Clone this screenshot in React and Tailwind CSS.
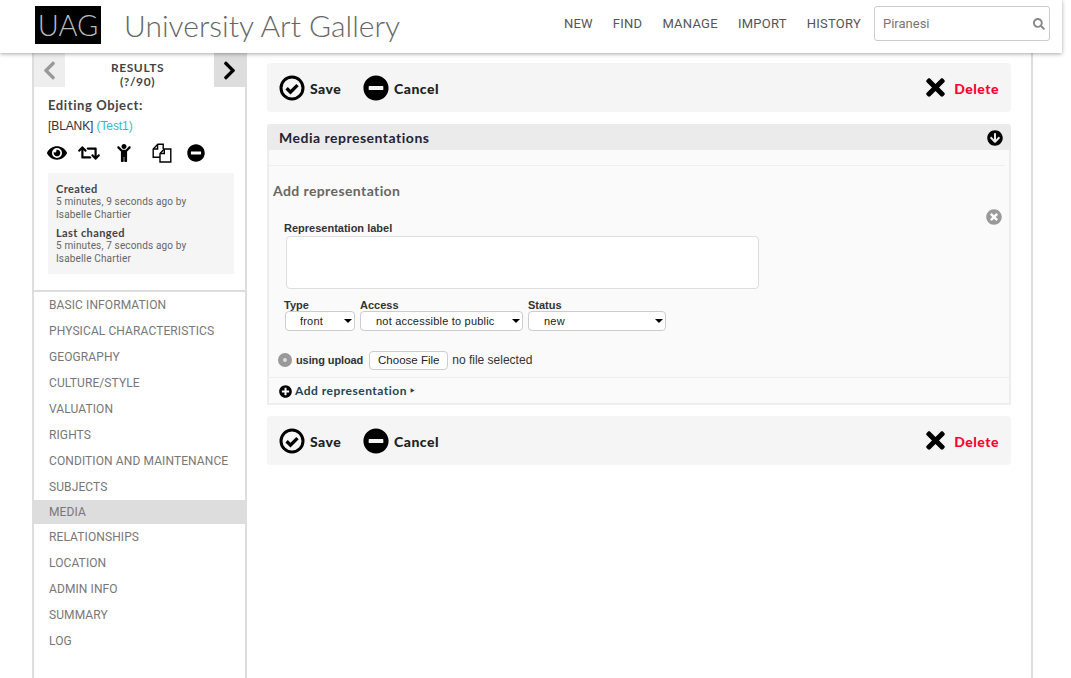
import React from 'react';
import { FaEye, FaRetweet, FaChild, FaMinusCircle, FaTimes, FaArrowCircleDown, FaTimesCircle, FaPlusCircle, FaSearch, FaChevronLeft, FaChevronRight } from 'react-icons/fa';

const din = { fontFamily: 'Roboto, "Liberation Sans", sans-serif' };
const nav = ['BASIC INFORMATION','PHYSICAL CHARACTERISTICS','GEOGRAPHY','CULTURE/STYLE','VALUATION','RIGHTS','CONDITION AND MAINTENANCE','SUBJECTS'];
const nav2 = ['RELATIONSHIPS','LOCATION','ADMIN INFO','SUMMARY','LOG'];
const heavy = 'font-["Lato",sans-serif] font-black';

function CheckRing() {
  return (
    <svg width="26" height="26" viewBox="0 0 26 26" fill="none">
      <circle cx="13" cy="13" r="11" stroke="#000" strokeWidth="3" />
      <path d="M7.6 13.2l3.9 3.9 7-7" stroke="#000" strokeWidth="3.4" strokeLinejoin="miter" />
    </svg>
  );
}

function Files() {
  return (
    <svg width="20" height="20" viewBox="0 0 20 20" fill="none" stroke="#000" strokeWidth="1.4">
      <path d="M8 14.3H1.2V6L5.8 1.2h5.4V6" />
      <path d="M5.6 1.4V6H1.4" />
      <path d="M8 19V10.5L12.3 6h6.5v13z" fill="#fff" />
      <path d="M12.3 6v4.5H8" />
    </svg>
  );
}

function Toolbar({ className = '' }) {
  const label = `mt-[2px] text-[14px] tracking-[0.5px] ${heavy}`;
  return (
    <div className={`flex h-[49px] items-center rounded bg-[#f5f5f5] pl-3 pr-3 ${className}`}>
      <CheckRing />
      <span className={`ml-[5px] w-[32px] ${label} text-[#222]`}>Save</span>
      <FaMinusCircle className="ml-[21px] text-[26px] text-black" />
      <span className={`ml-[5px] ${label} text-[#222]`}>Cancel</span>
      <FaTimes className="ml-auto text-[27px] text-black" />
      <span className={`ml-[5px] ${label} text-[#ff0033]`}>Delete</span>
    </div>
  );
}

function Sel({ width, text, cls }) {
  return (
    <div className={`relative h-5 ${width}`}>
      <select className={`h-5 w-full appearance-none rounded-[4px] border border-[#ccc] bg-white text-[11px] font-normal tracking-[0.2px] text-[#222] outline-none ${cls}`} defaultValue={text} style={{ fontFamily: '"Liberation Sans", sans-serif' }}>
        <option>{text}</option>
      </select>
      <span className="pointer-events-none absolute right-[3px] top-[8px] h-0 w-0 border-x-[4px] border-t-[4px] border-x-transparent border-t-black" />
    </div>
  );
}

export default function App() {
  const arial = { fontFamily: '"Liberation Sans", sans-serif' };
  return (
    <div className="relative h-[678px] w-[1071px] overflow-hidden bg-white" style={din}>
      <header className="relative z-10 flex h-[53px] w-[1062px] items-center bg-white pb-[6px] pl-[35px] shadow-[0_1px_4px_rgba(0,0,0,0.35)]">
        <div className="mt-[3px] flex h-[38px] w-[66px] items-center justify-center bg-black text-[29px] font-light text-[#bbb]" style={{ fontFamily: 'Lato, sans-serif' }}>UAG</div>
        <div className="ml-[23px] mt-[3px] text-[30px] font-light text-[#666]" style={{ fontFamily: 'Lato, sans-serif' }}>University Art Gallery</div>
        <nav className="ml-auto flex items-center gap-[20px] text-[13px] tracking-[0.25px] text-[#555]">
          <span>NEW</span><span>FIND</span><span>MANAGE</span><span>IMPORT</span><span>HISTORY</span>
        </nav>
        <div className="ml-[13px] mr-3 flex h-[35px] w-[176px] items-center rounded-[3px] border border-[#ccc] pl-2 pr-[4px]">
          <input className="w-full bg-transparent text-[13px] text-[#777] outline-none" defaultValue="Piranesi" />
          <FaSearch className="shrink-0 text-[12px] text-[#888]" />
        </div>
      </header>

      <div className="ml-[32px] flex h-[625px] w-[1001px] border-x-2 border-[#ddd]">
        <aside className="w-[213px] shrink-0 border-r-2 border-[#ddd]">
          <div className="flex h-[34px]">
            <div className="flex w-[31px] items-center justify-center bg-[#eee] text-[21px] text-[#999]"><FaChevronLeft /></div>
            <div className={`flex-1 pr-[4px] pt-[8px] text-center text-[12px] leading-[14px] tracking-[0.6px] text-[#444] ${heavy} !font-bold`}>RESULTS<br />(?/90)</div>
            <div className="flex w-[31px] items-center justify-center bg-[#ddd] text-[21px] text-black"><FaChevronRight /></div>
          </div>
          <div className="px-[14px]">
            <div className={`mt-[11px] text-[13px] tracking-[0.6px] leading-[14px] text-[#444] ${heavy} !font-bold`}>Editing Object:</div>
            <div className="mt-[7px] text-[12px] leading-[14px] tracking-[-0.1px] text-[#333]" style={arial}>[BLANK] <span className="text-[#33bbcc]">(Test1)</span></div>
            <div className="mt-[9px] flex h-[21px] items-center text-black">
              <FaEye className="-ml-px text-[20px]" />
              <FaRetweet className="ml-[11px] text-[22px]" />
              <FaChild className="ml-[15px] text-[18px]" />
              <span className="ml-[19px] flex"><Files /></span>
              <FaMinusCircle className="ml-[15px] text-[18px]" />
            </div>
            <div className="mt-[10px] h-[101px] w-[186px] bg-[#f5f5f5] px-2 pt-[9px] text-[10px] leading-[13px] tracking-[0.15px] text-[#666]">
              <div className={`${heavy} !font-bold text-[11px] text-[#444] tracking-[0.4px]`}>Created</div>
              <div>5 minutes, 9 seconds ago by</div>
              <div>Isabelle Chartier</div>
              <div className={`${heavy} !font-bold mt-[5px] text-[11px] text-[#444] tracking-[0.4px]`}>Last changed</div>
              <div>5 minutes, 7 seconds ago by</div>
              <div>Isabelle Chartier</div>
            </div>
          </div>
          <div className="mt-4 border-t-2 border-[#ddd] text-[12px] tracking-[0.1px] text-[#777]">
            {nav.map((n) => <div key={n} className="flex h-[26px] items-center pl-[15px]">{n}</div>)}
            <div className="flex h-[24px] items-center bg-[#ddd] pl-[15px]">MEDIA</div>
            {nav2.map((n) => <div key={n} className="flex h-[26px] items-center pl-[15px]">{n}</div>)}
          </div>
        </aside>

        <main className="w-[784px] px-[20px] pt-[10px]">
          <Toolbar />
          <section className="mt-3 rounded-t border-x-2 border-b-2 border-[#eee]">
            <div className="-mx-[2px] flex h-[26px] items-center justify-between rounded-t bg-[#ebebeb] pl-3 pr-2">
              <span className={`text-[14px] tracking-[0.5px] text-[#223] ${heavy} !font-bold`}>Media representations</span>
              <FaArrowCircleDown className="mt-[2px] text-[16px] text-black" />
            </div>
            <div className="relative h-[253px] bg-[#fafafa] pt-[15px]">
              <div className="mr-1 border-t border-[#eee] pl-[4px] pt-[17px]">
                <div className={`text-[14px] leading-[16px] tracking-[0.4px] text-[#666] ${heavy} !font-bold`}>Add representation</div>
                <FaTimesCircle className="absolute right-[7px] top-[59px] text-[16px] text-[#999]" />
                <div className="mt-[23px] pl-[11px] text-[11px] font-bold leading-[12px] text-[#333]" style={arial}>Representation label</div>
                <div className="pl-[13px]">
                  <textarea className="mt-[2px] block h-[53px] w-[473px] resize-none rounded-[4px] border border-[#ddd] bg-white outline-none" />
                </div>
                <div className="mt-[10px] flex gap-[5px] pl-[11px] text-[11px] font-bold leading-[12px] text-[#333]" style={arial}>
                  <div className="w-[71px]"><div>Type</div><Sel width="w-[70px] ml-[1px]" text="front" cls="pl-[14px]" /></div>
                  <div className="w-[163px]"><div>Access</div><Sel width="w-[163px]" text="not accessible to public" cls="pl-[15px]" /></div>
                  <div className="w-[138px]"><div>Status</div><Sel width="w-[138px]" text="new" cls="pl-[15px]" /></div>
                </div>
                <div className="mt-[19px] flex h-[20px] items-center pl-[5px] text-[11px] text-[#222]" style={arial}>
                  <span className="flex h-[14px] w-[14px] items-center justify-center rounded-full bg-[#999]"><span className="h-[4px] w-[4px] rounded-full bg-[#ddd]" /></span>
                  <span className="ml-[4px] font-bold tracking-[-0.1px] text-[#333]">using upload</span>
                  <button className="ml-[6px] h-[19px] w-[79px] rounded-[4px] border border-[#ccc] bg-white text-[11.5px] text-[#222]">Choose File</button>
                  <span className="ml-[4px] text-[12px] text-[#333]">no file selected</span>
                </div>
              </div>
              <div className="mt-[7px] flex h-[27px] items-center border-t border-[#eee] pl-[10px]">
                <FaPlusCircle className="text-[13px] text-black" />
                <span className={`ml-[3px] text-[12px] tracking-[0.5px] text-[#224455] ${heavy} !font-bold`}>Add representation ‣</span>
              </div>
            </div>
          </section>
          <Toolbar className="mt-[11px]" />
        </main>
      </div>
    </div>
  );
}
